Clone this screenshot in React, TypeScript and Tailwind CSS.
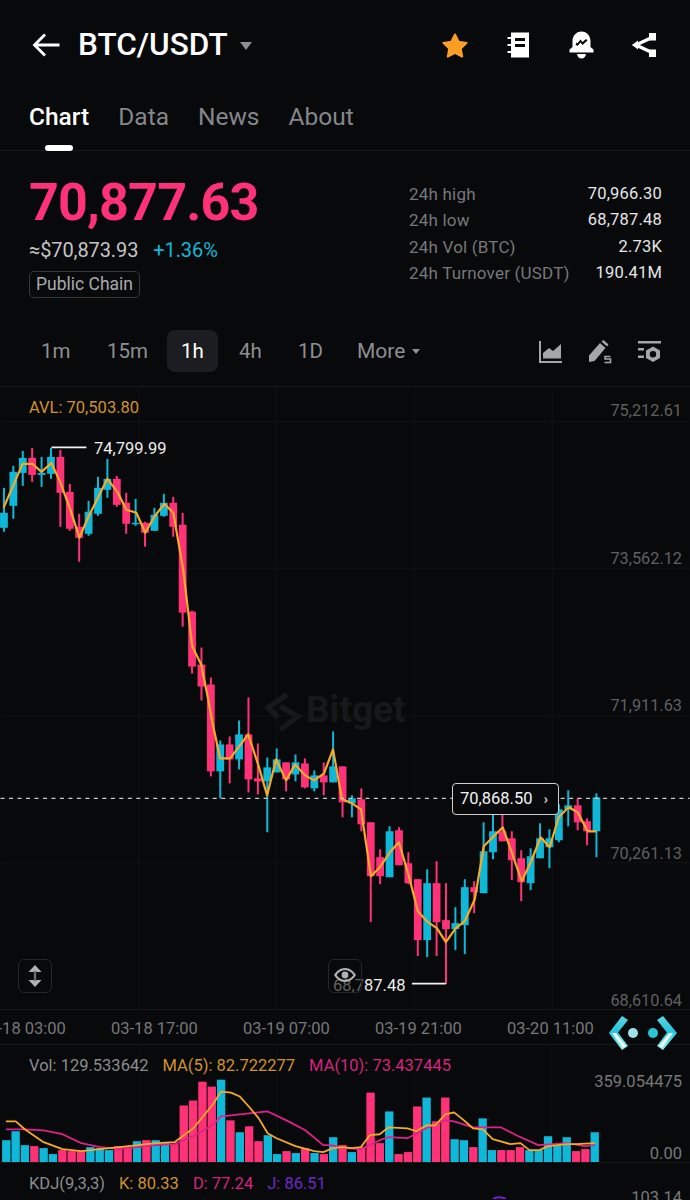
// [wickTop, bodyTop, bodyBottom, wickBottom, up]
type Candle = [number, number, number, number, 0 | 1];

const candles: Candle[] = [
  [488, 513, 528, 532, 1], [466, 472, 506, 519, 1], [451, 458, 473, 486, 1], [448, 458, 475, 482, 0],
  [457, 473, 475, 487, 1], [448, 457, 474, 479, 1], [450, 457, 493, 527, 0], [484, 492, 529, 531, 0],
  [514, 527, 538, 562, 0], [501, 512, 534, 536, 1], [477, 488, 514, 516, 1], [459, 479, 490, 498, 1],
  [476, 479, 505, 507, 0], [493, 503, 524, 534, 0], [499, 523, 524, 526, 1], [522, 523, 533, 547, 0],
  [508, 515, 531, 531, 1], [494, 503, 516, 517, 1], [497, 503, 527, 537, 0], [513, 525, 613, 627, 0],
  [611, 612, 667, 674, 0], [648, 665, 687, 701, 0], [678, 685, 772, 777, 0], [741, 745, 772, 799, 1],
  [737, 745, 760, 784, 0], [721, 735, 760, 770, 1], [698, 735, 780, 793, 0], [744, 779, 782, 795, 0],
  [758, 768, 782, 833, 1], [749, 760, 773, 773, 1], [763, 763, 780, 792, 0], [755, 763, 775, 782, 1],
  [759, 764, 788, 789, 0], [771, 776, 789, 792, 1], [763, 776, 783, 796, 0], [732, 767, 783, 783, 1],
  [767, 767, 803, 818, 0], [796, 799, 804, 818, 1], [789, 800, 825, 832, 0], [823, 823, 877, 923, 0],
  [850, 858, 877, 885, 0], [827, 832, 878, 878, 1], [828, 831, 866, 866, 0], [853, 864, 884, 885, 0],
  [880, 880, 941, 957, 0], [870, 884, 941, 958, 1], [862, 884, 923, 957, 0], [884, 921, 930, 985, 0],
  [908, 924, 930, 951, 1], [880, 888, 926, 955, 1], [882, 888, 893, 914, 0], [823, 852, 894, 894, 1],
  [815, 832, 853, 860, 1], [815, 832, 842, 842, 0], [832, 839, 861, 881, 0], [851, 859, 883, 902, 0],
  [849, 857, 884, 891, 1], [824, 839, 859, 859, 1], [830, 839, 848, 869, 1], [805, 810, 841, 843, 1],
  [791, 806, 810, 827, 1], [799, 806, 823, 831, 0], [819, 822, 832, 846, 0], [794, 798, 832, 858, 1],
];

const maLine =
  "3,508 13,485 22,464 32,464 41,472 51,463 60,483 70,510 79,538 88,517 98,497 107,479 117,492 126,510 136,513 145,533 154,517 164,504 173,513 183,570 192,647 201,665 208,700 212,722 220,759 230,759 239,747 248,735 258,765 267,796 276,760 286,781 295,765 305,776 314,781 324,774 333,750 342,800 352,804 361,810 371,877 380,868 390,853 399,843 409,877 418,912 428,923 437,929 446,943 456,929 465,922 475,900 484,847 494,837 503,828 512,853 522,882 531,863 541,838 550,848 559,818 569,808 578,813 588,832 597,832";

// top of each volume bar, page y, with colour
const volumes: [number, 0 | 1][] = [
  [1142, 1], [1133, 1], [1147, 1], [1148, 0], [1150, 1], [1156, 1], [1152, 0], [1153, 0], [1153, 0], [1149, 1],
  [1150, 1], [1152, 1], [1148, 0], [1149, 0], [1143, 1], [1142, 0], [1142, 1], [1145, 1], [1146, 0], [1107, 0],
  [1102, 0], [1083, 0], [1088, 0], [1081, 1], [1122, 0], [1134, 1], [1128, 0], [1143, 0], [1137, 1], [1156, 1],
  [1153, 0], [1155, 1], [1150, 0], [1155, 1], [1156, 0], [1139, 1], [1147, 0], [1154, 1], [1149, 0], [1094, 0],
  [1145, 0], [1113, 1], [1156, 0], [1154, 0], [1108, 0], [1099, 1], [1123, 0], [1099, 0], [1141, 1], [1142, 1],
  [1149, 0], [1120, 1], [1152, 1], [1152, 0], [1152, 0], [1149, 0], [1152, 1], [1152, 1], [1138, 1], [1147, 1],
  [1139, 1], [1153, 0], [1151, 0], [1134, 1],
];

const volMa5 =
  "3,1123 13,1123 22,1131 41,1144 60,1151 79,1153 98,1151 117,1149 136,1147 154,1145 173,1144 192,1130 211,1107 220,1093 230,1094 239,1098 248,1108 258,1120 267,1135 276,1140 295,1148 314,1153 323,1154 333,1150 342,1149 352,1150 361,1149 370,1137 380,1136 389,1129 408,1130 417,1133 427,1127 436,1127 446,1116 455,1114 465,1122 474,1130 484,1131 494,1141 512,1146 522,1145 531,1152 541,1152 550,1148 569,1146 578,1146 597,1145";
const volMa10 =
  "3,1131 22,1131 41,1132 60,1136 79,1145 98,1149 117,1151 136,1149 154,1147 173,1146 192,1138 211,1127 220,1118 230,1117 248,1115 267,1113 286,1122 305,1132 323,1147 330,1147 345,1150 361,1151 380,1142 389,1139 408,1140 427,1130 446,1122 455,1123 474,1129 502,1129 520,1138 540,1147 569,1145 587,1148 597,1147";

const candleX = (i: number) => 3.4 + i * 9.42;

function PriceChart() {
  return (
    <svg viewBox="0 387 690 623" className="absolute inset-0 h-full w-full">
      {[421, 568, 716, 863].map((y) => (
        <line key={y} x1="0" x2="690" y1={y + 0.5} y2={y + 0.5} stroke="#131416" />
      ))}
      {[138, 276, 414, 552].map((x) => (
        <line key={x} x1={x + 0.5} x2={x + 0.5} y1="387" y2="1010" stroke="#111214" />
      ))}
      {/* watermark logo */}
      <path d="M287 695 L268 708 L278 718" fill="none" stroke="#17181a" strokeWidth="5.5" />
      <path d="M280 707 L298 717 L280 730" fill="none" stroke="#17181a" strokeWidth="5.5" />
      {candles.map(([wt, bt, bb, wb, up], i) => {
        const c = up ? "#0fb8d8" : "#ff3278";
        const x = candleX(i);
        return (
          <g key={i} fill={c}>
            <rect x={x - 1} y={wt} width="2" height={wb - wt} />
            <rect x={x - 3.9} y={bt} width="7.8" height={Math.max(bb - bt, 1.5)} />
          </g>
        );
      })}
      <polyline points={maLine} fill="none" stroke="#f7a928" strokeWidth="2.2" strokeLinejoin="round" />
      <line x1="0" x2="690" y1="799" y2="799" stroke="#c9c9c9" strokeWidth="1.2" strokeDasharray="4 4.5" />
      <line x1="51" x2="86" y1="447.5" y2="447.5" stroke="#f2f2f2" strokeWidth="1.8" />
      <line x1="412" x2="446" y1="984.5" y2="984.5" stroke="#f2f2f2" strokeWidth="1.8" />
    </svg>
  );
}

function VolumeChart() {
  return (
    <svg viewBox="0 1046 690 118" className="absolute inset-0 h-full w-full">
      {[138, 276, 414, 552].map((x) => (
        <line key={x} x1={x + 0.5} x2={x + 0.5} y1="1046" y2="1164" stroke="#111214" />
      ))}
      {volumes.map(([top, up], i) => (
        <rect
          key={i}
          x={candleX(i) - 4.2}
          y={top}
          width="8.4"
          height={1164.4 - top}
          fill={up ? "#0fb8d8" : "#ff3278"}
        />
      ))}
      <polyline points={volMa10} fill="none" stroke="#e0218a" strokeWidth="1.8" strokeLinejoin="round" />
      <polyline points={volMa5} fill="none" stroke="#f7a928" strokeWidth="1.8" strokeLinejoin="round" />
    </svg>
  );
}

function TopIcons() {
  return (
    <div className="flex items-center gap-[39px]">
      <svg width="28" height="27" viewBox="0 0 28 27" className="mr-[-2px] ml-[2px]">
        <path
          d="M14 2.5 L17.6 9.8 L25.6 10.9 L19.8 16.6 L21.2 24.6 L14 20.8 L6.8 24.6 L8.2 16.6 L2.4 10.9 L10.4 9.8 Z"
          fill="#fb9f26"
          stroke="#fb9f26"
          strokeWidth="2"
          strokeLinejoin="round"
        />
      </svg>
      <svg width="24" height="26" viewBox="0 0 24 26" className="mr-[1px]">
        <path
          fillRule="evenodd"
          d="M5 0.5 H23 V25.5 H5 V21 H1.5 V19 H5 V14 H1.5 V12 H5 V7 H1.5 V5 H5 Z M9 6 V9 H19 V6 Z M9 12 V15 H19 V12 Z"
          fill="#fff"
        />
      </svg>
      <svg width="25" height="28" viewBox="0 0 25 28" className="mx-[-1px]">
        <path
          fillRule="evenodd"
          d="M12.5 0.5 C18 0.5 21.5 5 21.5 10 V16 L24.5 18.5 V21.5 H0.5 V18.5 L3.5 16 V10 C3.5 5 7 0.5 12.5 0.5 Z M6.5 13.5 L8.5 15 L11.5 11.5 L13.5 14 L18.5 9.5 L17 8 L13.5 11 L11.5 8.5 L8.5 12.2 L7.5 11.5 Z"
          fill="#fff"
        />
        <path d="M8 23 H17 C16.5 26 14.5 27.5 12.5 27.5 C10.5 27.5 8.5 26 8 23 Z" fill="#fff" />
      </svg>
      <svg width="24" height="24" viewBox="0 0 24 24">
        <path d="M22 3.5 L4 12 L22 20.5" fill="none" stroke="#fff" strokeWidth="3.4" />
        <rect x="17" y="0" width="7" height="7.5" fill="#fff" />
        <rect x="17" y="16.5" width="7" height="7.5" fill="#fff" />
        <path d="M0 12 L6 7.5 V16.5 Z" fill="#fff" />
      </svg>
    </div>
  );
}

function ChartToolIcons() {
  return (
    <div className="flex items-center gap-[26px]">
      <svg width="23" height="22" viewBox="0 0 23 22">
        <path d="M1 0 V21 H23" fill="none" stroke="#a5a6a8" strokeWidth="2" />
        <path d="M4 17.5 V12 L10 7 L14 10 L22 3 V17.5 Z" fill="#a5a6a8" />
      </svg>
      <svg width="24" height="24" viewBox="0 0 24 24">
        <path d="M1 22 V15.5 L12 3 L17.5 8 L6.5 21 Z M13.5 1.5 L15.5 0 L20.5 4.5 L19 6.5 Z" fill="#a5a6a8" />
        <path d="M22.5 16.5 H17 V19 H22.5 V22.5 H16.5" fill="none" stroke="#a5a6a8" strokeWidth="1.6" />
      </svg>
      <svg width="23" height="22" viewBox="0 0 23 22">
        <rect x="0" y="0" width="23" height="2.5" fill="#a5a6a8" />
        <rect x="0" y="7" width="6" height="2.5" fill="#a5a6a8" />
        <rect x="0" y="14.5" width="6" height="2.5" fill="#a5a6a8" />
        <path
          fillRule="evenodd"
          d="M15 5.5 L22 9.5 V17 L15 21 L8 17 V9.5 Z M15 10 A3.2 3.2 0 1 0 15 16.4 A3.2 3.2 0 1 0 15 10 Z"
          fill="#a5a6a8"
        />
      </svg>
    </div>
  );
}

function FloatingBadge() {
  return (
    <svg width="72" height="36" viewBox="0 0 72 36" className="absolute right-[11px] top-[-3px]">
      <defs>
        <linearGradient id="fb" x1="0" y1="0" x2="0" y2="1">
          <stop offset="0" stopColor="#5fd4e2" />
          <stop offset="0.45" stopColor="#22c8dc" />
          <stop offset="1" stopColor="#9fe8f0" />
        </linearGradient>
      </defs>
      <path d="M15 1 L21 5 L11 17.5 L21 31 L15 35 L2 18 Z" fill="url(#fb)" />
      <path d="M56 1 L50 5 L60 17.5 L50 31 L56 35 L70 18 Z" fill="url(#fb)" />
      <path d="M5 18 L16 33 L19 31 L9 18 Z" fill="#e4fafb" />
      <path d="M55 33 L52 31 L62 18 L66 18 Z" fill="#e4fafb" />
      <circle cx="26" cy="18" r="5" fill="#9fe2ea" />
      <circle cx="46" cy="18" r="5" fill="#2bc4d6" />
    </svg>
  );
}

const priceAxis = [
  { label: "75,212.61", cls: "top-[14px]" },
  { label: "73,562.12", cls: "top-[162px]" },
  { label: "71,911.63", cls: "top-[309px]" },
  { label: "70,261.13", cls: "top-[457px]" },
  { label: "68,610.64", cls: "top-[604px]" },
];

const stats = [
  ["24h high", "70,966.30"],
  ["24h low", "68,787.48"],
  ["24h Vol (BTC)", "2.73K"],
  ["24h Turnover (USDT)", "190.41M"],
];

export default function App() {
  return (
    <div className="h-[1200px] w-[690px] overflow-hidden bg-[#08090a] font-['Roboto',sans-serif] text-white">
      {/* title bar */}
      <header className="flex h-[90px] items-center justify-between pl-[32px] pr-[34px]">
        <div className="flex items-center">
          <svg width="28" height="24" viewBox="0 0 28 24">
            <path d="M13 1.5 L2.5 12 L13 22.5 M2.5 12 H27.5" fill="none" stroke="#fff" strokeWidth="2.8" />
          </svg>
          <span className="ml-[18px] text-[31.5px] font-medium leading-none">BTC/USDT</span>
          <span className="ml-[12px] mt-[1px] h-0 w-0 border-x-[6px] border-t-[8px] border-x-transparent border-t-[#8d8e90]" />
        </div>
        <TopIcons />
      </header>

      {/* tabs */}
      <nav className="relative flex h-[61px] items-start gap-[29px] border-b border-[#17181a] pl-[29px] pt-[11px] text-[24.5px] leading-[32px] text-[#85868a]">
        <span className="font-medium text-white">Chart</span>
        <span>Data</span>
        <span>News</span>
        <span>About</span>
        <span className="absolute bottom-[-1px] left-[45px] h-[6px] w-[28px] rounded-sm bg-white" />
      </nav>

      {/* ticker summary */}
      <section className="flex h-[166px] justify-between pl-[29px] pr-[28px]">
        <div className="flex flex-col items-start">
          <div className="mt-[22px] text-[52px] font-bold leading-[60px] tracking-[-0.8px] text-[#ff3278]">70,877.63</div>
          <div className="mt-[4px] flex gap-[15px] text-[20px] leading-[26px] tracking-[-0.1px]">
            <span className="text-[#c4c4c6]">≈$70,873.93</span>
            <span className="text-[#0fb8d8]">+1.36%</span>
          </div>
          <div className="mt-[8px] rounded-[5px] border border-[#37383b] px-[6px] text-[17.5px] leading-[25px] text-[#a9aaad]">
            Public Chain
          </div>
        </div>
        <div className="mt-[30px] flex w-[253px] flex-col text-[17px] leading-[26.3px] tracking-[0.2px]">
          {stats.map(([label, value]) => (
            <div key={label} className="flex justify-between">
              <span className="text-[#77787b]">{label}</span>
              <span className="text-[16.5px] text-[#e6e6e8]">{value}</span>
            </div>
          ))}
        </div>
      </section>

      {/* interval row */}
      <section className="flex h-[70px] items-start justify-between border-b border-[#17181a] pr-[29px]">
        <div className="relative mt-[13px] h-[42px] w-[440px] text-[20.5px] leading-[42px] text-[#8e8f92]">
          <span className="absolute left-[41px]">1m</span>
          <span className="absolute left-[107px]">15m</span>
          <span className="absolute left-[167px] h-[42px] w-[51px] rounded-lg bg-[#1c1d20] text-center text-white">1h</span>
          <span className="absolute left-[239px]">4h</span>
          <span className="absolute left-[298px]">1D</span>
          <span className="absolute left-[357px] text-[21px]">More</span>
          <span className="absolute left-[412px] top-[19px] h-0 w-0 border-x-[4px] border-t-[5px] border-x-transparent border-t-[#8e8f92]" />
        </div>
        <div className="mt-[23px] ml-[1px]">
          <ChartToolIcons />
        </div>
      </section>

      {/* main chart */}
      <section className="relative h-[623px] border-b border-[#17181a] text-[16.5px] leading-[20px]">
        <PriceChart />
        <span className="absolute left-[29px] top-[11px] text-[#d2922a]">AVL: 70,503.80</span>
        <span className="absolute left-[94px] top-[52px] text-[#ededed]">74,799.99</span>
        {priceAxis.map((p) => (
          <span key={p.label} className={`absolute right-[8px] text-[16.3px] text-[#5f6063] ${p.cls}`}>
            {p.label}
          </span>
        ))}
        <span className="absolute left-[306px] top-[301px] text-[37px] font-bold leading-[44px] text-[#17181a]">Bitget</span>
        <div className="absolute left-[452px] top-[396px] flex h-[32px] w-[107px] items-center justify-between rounded border border-[#cfcfcf] bg-[#08090a] pl-[7px] pr-[10px] text-[#f2f2f2]">
          <span>70,868.50</span>
          <span className="text-[14px]">›</span>
        </div>
        <span className="absolute left-[333px] top-[589px]">
          <span className="text-[#5f6063]">68,7</span>
          <span className="text-[#ededed]">87.48</span>
        </span>
        <div className="absolute left-[18px] top-[572px] flex h-[34px] w-[34px] items-center justify-center rounded-md border border-[#26272a]">
          <svg width="14" height="22" viewBox="0 0 14 22">
            <path d="M7 0 L13.5 7 H0.5 Z M7 22 L13.5 15 H0.5 Z" fill="#b0b1b3" />
            <rect x="5.8" y="6" width="2.4" height="10" fill="#6b6c6e" />
          </svg>
        </div>
        <div className="absolute left-[328px] top-[572px] flex h-[34px] w-[34px] items-start justify-center rounded-md border border-[#26272a] pt-[8px]">
          <svg width="22" height="14" viewBox="0 0 22 14">
            <path
              fillRule="evenodd"
              d="M11 0 C16 0 20 3.5 22 7 C20 10.5 16 14 11 14 C6 14 2 10.5 0 7 C2 3.5 6 0 11 0 Z M11 2 C7.5 2 4.5 4.2 2.6 7 C4.5 9.8 7.5 12 11 12 C14.5 12 17.5 9.8 19.4 7 C17.5 4.2 14.5 2 11 2 Z"
              fill="#b0b1b3"
            />
            <circle cx="11" cy="7" r="3.4" fill="#b0b1b3" />
          </svg>
        </div>
      </section>

      {/* time axis */}
      <section className="relative h-[35px] overflow-visible border-b border-[#17181a] text-[16.5px] leading-[37px] text-[#77787b]">
        <span className="absolute left-[-21px]">03-18 03:00</span>
        <span className="absolute left-[111px]">03-18 17:00</span>
        <span className="absolute left-[243px]">03-19 07:00</span>
        <span className="absolute left-[375px]">03-19 21:00</span>
        <span className="absolute left-[507px]">03-20 11:00</span>
        <div className="absolute right-0 top-[8px] h-[30px] w-[90px]">
          <FloatingBadge />
        </div>
      </section>

      {/* volume */}
      <section className="relative h-[118px] border-b border-[#17181a] text-[16.5px] leading-[20px]">
        <VolumeChart />
        <div className="absolute left-[29px] top-[11px] flex gap-[14px]">
          <span className="text-[#8b8c8f]">Vol: 129.533642</span>
          <span className="text-[#d2922a]">MA(5): 82.722277</span>
          <span className="text-[#d6247f]">MA(10): 73.437445</span>
        </div>
        <span className="absolute right-[8px] top-[27px] text-[#77787b]">359.054475</span>
        <span className="absolute right-[8px] top-[99px] text-[#77787b]">0.00</span>
      </section>

      {/* kdj */}
      <section className="relative h-[36px] text-[16.5px] leading-[20px]">
        <div className="absolute left-[29px] top-[11px] flex gap-[14px]">
          <span className="text-[#8b8c8f]">KDJ(9,3,3)</span>
          <span className="text-[#d2922a]">K: 80.33</span>
          <span className="text-[#d6247f]">D: 77.24</span>
          <span className="text-[#6f28c8]">J: 86.51</span>
        </div>
        <span className="absolute right-[8px] top-[25px] text-[#77787b]">103.14</span>
        <svg width="16" height="3" viewBox="0 0 16 3" className="absolute left-[492px] top-[33px]">
          <path d="M1 3 C4 0.5 10 0.5 14 3" fill="none" stroke="#7a1fd0" strokeWidth="2" />
        </svg>
      </section>
    </div>
  );
}
